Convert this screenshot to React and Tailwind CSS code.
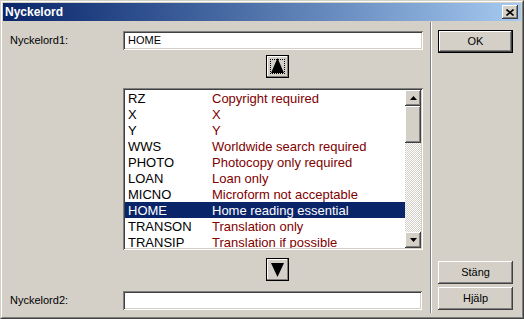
const raised =
  "shadow-[inset_-1px_-1px_#404040,inset_1px_1px_#ffffff,inset_-2px_-2px_#808080,inset_2px_2px_#d4d0c8]"
const sunken =
  "shadow-[inset_1px_1px_#808080,inset_-1px_-1px_#ffffff,inset_2px_2px_#404040,inset_-2px_-2px_#d4d0c8]"

const rows = [
  ["RZ", "Copyright required"],
  ["X", "X"],
  ["Y", "Y"],
  ["WWS", "Worldwide search required"],
  ["PHOTO", "Photocopy only required"],
  ["LOAN", "Loan only"],
  ["MICNO", "Microform not acceptable"],
  ["HOME", "Home reading essential"],
  ["TRANSON", "Translation only"],
  ["TRANSIP", "Translation if possible"],
]

const Button = ({ children, isDefault }) =>
  isDefault ? (
    <div className="w-[75px] h-[23px] border border-black bg-[#d4d0c8]">
      <div className="w-full h-full flex items-center justify-center text-[11px] text-black shadow-[inset_-1px_-1px_#404040,inset_1px_1px_#ffffff,inset_-2px_-2px_#808080]">
        {children}
      </div>
    </div>
  ) : (
    <div className={`w-[75px] h-[23px] bg-[#d4d0c8] flex items-center justify-center text-[11px] text-black ${raised}`}>
      {children}
    </div>
  )

const ArrowButton = ({ up }) => (
  <div className="ml-[143px] w-[23px] h-[23px] border border-black bg-[#d4d0c8]">
    <div className="relative w-full h-full shadow-[inset_-1px_-1px_#808080,inset_1px_1px_#ffffff]">
      {up && <div className="absolute inset-[3px] border border-dotted border-black" />}
      <svg width="21" height="21" viewBox="0 0 21 21" className="absolute left-0 top-0">
        {up ? (
          <polygon points="10.5,2 17,17 4,17" fill="black" />
        ) : (
          <polygon points="4,4 17,4 10.5,18" fill="black" />
        )}
      </svg>
    </div>
  </div>
)

const ScrollArrow = ({ up }) => (
  <div className={`w-[16px] h-[16px] bg-[#d4d0c8] flex items-center justify-center ${raised}`}>
    <svg width="7" height="4" viewBox="0 0 7 4">
      {up ? <polygon points="3.5,0 7,4 0,4" fill="black" /> : <polygon points="0,0 7,0 3.5,4" fill="black" />}
    </svg>
  </div>
)

export default function App() {
  return (
    <div className="w-[524px] h-[319px] bg-[#d4d0c8] border border-t-[#d4d0c8] border-l-[#d4d0c8] border-b-[#404040] border-r-[#404040] font-['Liberation_Sans',Arial,sans-serif]">
      <div className="h-full border border-t-white border-l-white border-b-[#808080] border-r-[#808080] p-px flex flex-col">
        {/* title bar */}
        <div className="h-[18px] flex items-center justify-between bg-gradient-to-r from-[#0a246a] to-[#a6caf0] pl-[2px] pr-[3px]">
          <span className="text-[12px] font-bold text-white leading-none">Nyckelord</span>
          <div className={`w-[16px] h-[14px] bg-[#d4d0c8] flex items-center justify-center ${raised}`}>
            <svg width="8" height="7" viewBox="0 0 8 7">
              <path d="M0.5 0.5 L7.5 6.5 M7.5 0.5 L0.5 6.5" stroke="black" strokeWidth="1.6" />
            </svg>
          </div>
        </div>

        <div className="flex flex-1 mt-px">
          {/* left side */}
          <div className="w-[427px] flex flex-col pl-[7px]">
            <div className="flex items-center mt-[9px]">
              <span className="w-[113px] text-[11px] text-black">Nyckelord1:</span>
              <div className={`w-[300px] h-[19px] bg-white flex items-center pl-[5px] text-[11px] text-black ${sunken}`}>
                HOME
              </div>
            </div>

            <div className="pl-[113px] mt-[5px]">
              <ArrowButton up />
            </div>

            <div className="pl-[113px] mt-[10px]">
              <div className={`w-[300px] h-[162px] bg-white p-[2px] flex ${sunken}`}>
                <div className="w-[280px] flex flex-col overflow-hidden">
                  {rows.map(([code, text]) => {
                    const sel = code === "HOME"
                    return (
                      <div
                        key={code}
                        className={`h-[16px] shrink-0 flex items-center text-[13px] leading-none ${sel ? "bg-[#0a246a]" : ""}`}
                      >
                        <span className={`w-[87px] pl-[3px] ${sel ? "text-white" : "text-black"}`}>{code}</span>
                        <span className={sel ? "text-white" : "text-[#800000]"}>{text}</span>
                      </div>
                    )
                  })}
                </div>
                <div className="w-[16px] flex flex-col">
                  <ScrollArrow up />
                  <div className={`h-[37px] bg-[#d4d0c8] ${raised}`} />
                  <div className="flex-1 bg-[image:repeating-conic-gradient(#d4d0c8_0_25%,#ffffff_0_50%)] bg-[length:2px_2px]" />
                  <ScrollArrow />
                </div>
              </div>
            </div>

            <div className="pl-[113px] mt-[8px]">
              <ArrowButton />
            </div>

            <div className="flex items-center mt-[10px]">
              <span className="w-[113px] text-[11px] text-black">Nyckelord2:</span>
              <div className={`w-[299px] h-[19px] bg-white ${sunken}`} />
            </div>
          </div>

          {/* divider */}
          <div className="w-[2px] mb-[3px] border-l border-l-[#808080] border-r border-r-white" />

          {/* right side */}
          <div className="flex-1 flex flex-col pl-[6px] pt-[8px] pb-[6px]">
            <Button isDefault>OK</Button>
            <div className="flex-1" />
            <Button>Stäng</Button>
            <div className="mt-[3px]">
              <Button>Hjälp</Button>
            </div>
          </div>
        </div>
      </div>
    </div>
  )
}
